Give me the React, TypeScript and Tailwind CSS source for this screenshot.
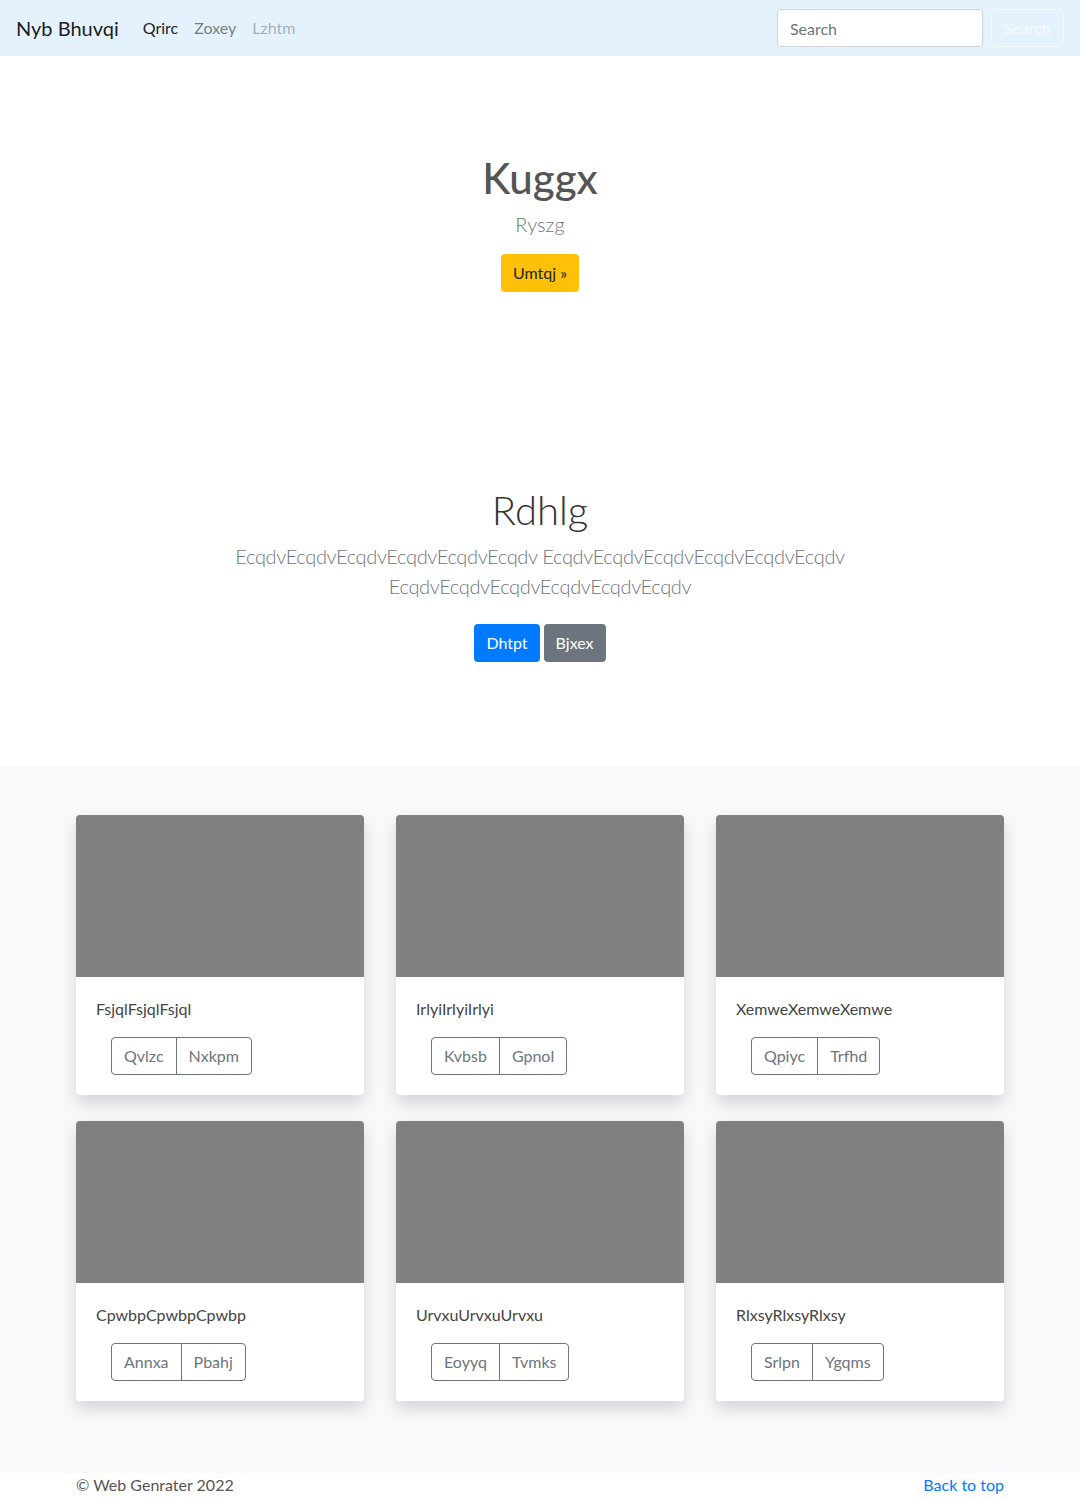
import React from "react";

const cards = [
  { title: "FsjqlFsjqlFsjql", a: "Qvlzc", b: "Nxkpm" },
  { title: "IrlyiIrlyiIrlyi", a: "Kvbsb", b: "Gpnol" },
  { title: "XemweXemweXemwe", a: "Qpiyc", b: "Trfhd" },
  { title: "CpwbpCpwbpCpwbp", a: "Annxa", b: "Pbahj" },
  { title: "UrvxuUrvxuUrvxu", a: "Eoyyq", b: "Tvmks" },
  { title: "RlxsyRlxsyRlxsy", a: "Srlpn", b: "Ygqms" },
];

export default function App() {
  return (
    <div className="min-h-[1498px] bg-white text-[#212529] font-['Lato',sans-serif]">
      <nav className="flex h-14 items-center bg-[#e3f2fd] px-4">
        <span className="mr-4 text-[20px] leading-[30px] text-[rgba(0,0,0,0.9)]">Nyb Bhuvqi</span>
        <div className="flex flex-1 items-center">
          <a className="px-2 text-[16px] leading-6 text-[rgba(0,0,0,0.9)]">Qrirc</a>
          <a className="px-2 text-[16px] leading-6 text-[rgba(0,0,0,0.5)]">Zoxey</a>
          <a className="px-2 text-[16px] leading-6 text-[rgba(0,0,0,0.3)]">Lzhtm</a>
        </div>
        <div className="flex items-center">
          <input
            placeholder="Search"
            className="mr-2 h-[38px] w-[206px] rounded border border-[#ced4da] bg-white px-3 text-[16px] text-[#495057] placeholder:text-[#6c757d] outline-none"
          />
          <button className="h-[38px] rounded border border-[#f8f9fa] px-3 text-[16px] text-[#f8f9fa]">Search</button>
        </div>
      </nav>

      <section className="flex flex-col items-center pt-[98px] text-center">
        <h1 className="text-[42px] font-medium leading-[48px] text-[#555]">Kuggx</h1>
        <p className="mt-[7px] text-[20px] font-light leading-[30px] text-[#6c757d]">Ryszg</p>
        <button className="mt-[15px] h-[38px] rounded bg-[#ffc107] px-3 text-[16px] text-[#212529]">Umtqj »</button>
      </section>

      <section className="mx-auto flex w-[640px] flex-col items-center pt-[194px] pb-[104px] text-center">
        <h1 className="text-[40px] font-light leading-[48px] text-[#333]">Rdhlg</h1>
        <p className="mt-[7px] text-[20px] font-light leading-[30px] tracking-[-0.35px] text-[#6c757d]">
          EcqdvEcqdvEcqdvEcqdvEcqdvEcqdv EcqdvEcqdvEcqdvEcqdvEcqdvEcqdv EcqdvEcqdvEcqdvEcqdvEcqdvEcqdv
        </p>
        <div className="mt-[23px] flex gap-1">
          <button className="h-[38px] rounded bg-[#007bff] px-3 text-[16px] text-white">Dhtpt</button>
          <button className="h-[38px] rounded bg-[#6c757d] px-3 text-[16px] text-white">Bjxex</button>
        </div>
      </section>

      <section className="bg-[#f8f9fa] pt-[49px] pb-[72px]">
        <div className="mx-auto grid w-[960px] grid-cols-3 gap-x-8 gap-y-[26px] px-4">
          {cards.map((c) => (
            <div key={c.title} className="overflow-hidden rounded bg-white shadow-[0_8px_16px_rgba(0,0,0,0.15)]">
              <div className="h-[162px] bg-[#808080]" />
              <div className="p-5">
                <p className="text-[16px] leading-6 text-[#444]">{c.title}</p>
                <div className="mt-4 ml-[15px] flex">
                  <button className="h-[38px] rounded-l border border-[#6c757d] px-3 text-[16px] text-[#6c757d]">{c.a}</button>
                  <button className="-ml-px h-[38px] rounded-r border border-[#6c757d] px-3 text-[16px] text-[#6c757d]">{c.b}</button>
                </div>
              </div>
            </div>
          ))}
        </div>
      </section>

      <footer className="mx-auto flex w-[960px] justify-between px-4 text-[16px] leading-6">
        <span className="text-[#555]">© Web Genrater 2022</span>
        <a className="text-[#007bff]">Back to top</a>
      </footer>
    </div>
  );
}
